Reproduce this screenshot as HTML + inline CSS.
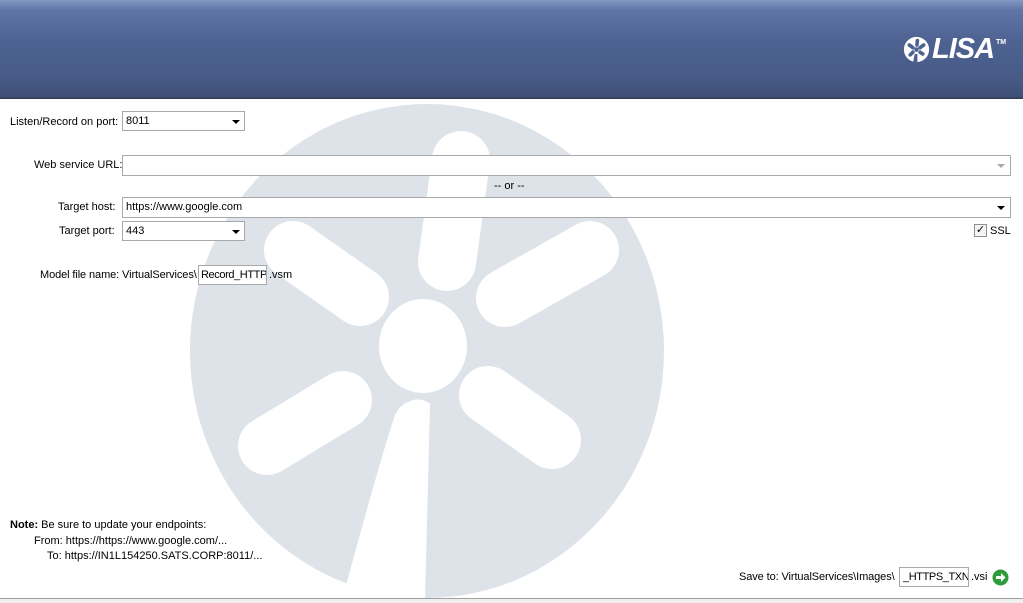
<!DOCTYPE html>
<html><head><style>
*{margin:0;padding:0;box-sizing:border-box}
body{width:1023px;height:603px;position:relative;overflow:hidden;background:#fff;font-family:"Liberation Sans",sans-serif;font-size:11px;color:#000}
.hdr{position:absolute;left:0;top:0;width:1023px;height:99px;background:linear-gradient(#8597c2 0px,#5f76a6 10px,#4e6392 40px,#475a86 80px,#3f4f73 97px,#2c3548 99px)}
.t{position:absolute;white-space:nowrap;line-height:13px}
.box{position:absolute;border:1px solid #a9a9a9;background:#fff;padding-left:3px;line-height:18px;font-size:11px;overflow:hidden;white-space:nowrap}
.arr{position:absolute;width:0;height:0;border-left:4px solid transparent;border-right:4px solid transparent;border-top:4px solid #000}
</style></head><body>
<div class="hdr"></div>
<div class="t" style="left:932px;top:33px;color:#fff;font-size:29px;font-weight:bold;font-style:italic;line-height:32px;letter-spacing:-1px">LISA</div>
<svg style="position:absolute;left:903px;top:36px" width="27" height="27" viewBox="0 0 30 30"><circle cx="15" cy="15" r="14" fill="#fff"/><g stroke="#4c6190" stroke-width="4" stroke-linecap="round"><line x1="16" y1="5" x2="15.5" y2="10"/><line x1="7" y1="10" x2="11" y2="13"/><line x1="23" y1="10" x2="19" y2="13"/><line x1="8" y1="21" x2="11" y2="18"/><line x1="22" y1="20" x2="19" y2="18"/></g><circle cx="15" cy="15" r="2.5" fill="#4c6190"/><polygon points="13,20 16,20 16,30 11,30" fill="#4c6190"/></svg>
<div class="t" style="left:996px;top:36px;color:#fff;font-size:7px;font-weight:bold">TM</div>

<svg style="position:absolute;left:0;top:99px" width="1023" height="500" viewBox="0 99 1023 500">
<ellipse cx="427" cy="351" rx="237" ry="247" fill="#dde3e9"/>
<g stroke="#fff" stroke-width="58" stroke-linecap="round">
<line x1="461" y1="160" x2="447" y2="262"/>
<line x1="293" y1="250" x2="360" y2="297"/>
<line x1="590" y1="250" x2="505" y2="298"/>
<line x1="343" y1="400" x2="267" y2="446"/>
<line x1="488" y1="395" x2="552" y2="440"/>
</g>
<ellipse cx="423" cy="346" rx="44" ry="47" fill="#fff"/>
<path d="M408 402 Q420 396 430 404 L425 600 L342 600 Q380 460 395 415 Q400 405 408 402 Z" fill="#fff"/>
</svg>

<div class="t" style="left:10px;top:116px">Listen/Record on port:</div>
<div class="box" style="left:122px;top:111px;width:123px;height:20px">8011</div><div class="arr" style="left:232px;top:120px"></div>

<div class="t" style="left:34px;top:159px">Web service URL:</div>
<div class="box" style="left:122px;top:155px;width:889px;height:21px"></div><div class="arr" style="left:997px;top:164px;border-top-color:#aaa"></div>
<div class="t" style="left:494px;top:180px">-- or --</div>

<div class="t" style="left:58px;top:201px">Target host:</div>
<div class="box" style="left:122px;top:197px;width:889px;height:21px">https://www.google.com</div><div class="arr" style="left:997px;top:206px"></div>
<div class="t" style="left:59px;top:225px">Target port:</div>
<div class="box" style="left:122px;top:221px;width:123px;height:20px">443</div><div class="arr" style="left:232px;top:230px"></div>
<div style="position:absolute;left:974px;top:224px;width:13px;height:13px;border:1px solid #8f8f8f;background:#f4f4f4;font-size:11px;line-height:11px;text-align:center">&#10003;</div>
<div class="t" style="left:990px;top:225px">SSL</div>

<div class="t" style="left:40px;top:269px;letter-spacing:-0.1px">Model file name: VirtualServices\</div>
<div class="box" style="left:198px;top:265px;width:69px;height:20px;padding-left:2px;letter-spacing:-0.4px">Record_HTTP</div>
<div class="t" style="left:269px;top:269px">.vsm</div>

<div class="t" style="left:10px;top:519px"><b>Note:</b> Be sure to update your endpoints:</div>
<div class="t" style="left:34px;top:535px">From: https://https://www.google.com/...</div>
<div class="t" style="left:47px;top:550px">To: https://IN1L154250.SATS.CORP:8011/...</div>

<div class="t" style="left:739px;top:571px;letter-spacing:-0.1px">Save to: VirtualServices\Images\</div>
<div class="box" style="left:899px;top:567px;width:70px;height:20px;padding-left:3px;letter-spacing:-0.4px">_HTTPS_TXN|</div>
<div class="t" style="left:971px;top:571px">.vsi</div>
<svg style="position:absolute;left:992px;top:569px" width="17" height="17" viewBox="0 0 17 17"><circle cx="8.5" cy="8.5" r="8" fill="#2e9b3a"/><path d="M4 7h5V4l4.5 4.5L9 13v-3H4z" fill="#fff"/></svg>

<div style="position:absolute;left:0;top:598px;width:1023px;height:1px;background:#a0a0a0"></div>
<div style="position:absolute;left:0;top:599px;width:1023px;height:4px;background:#f0f0f0"></div>
</body></html>
